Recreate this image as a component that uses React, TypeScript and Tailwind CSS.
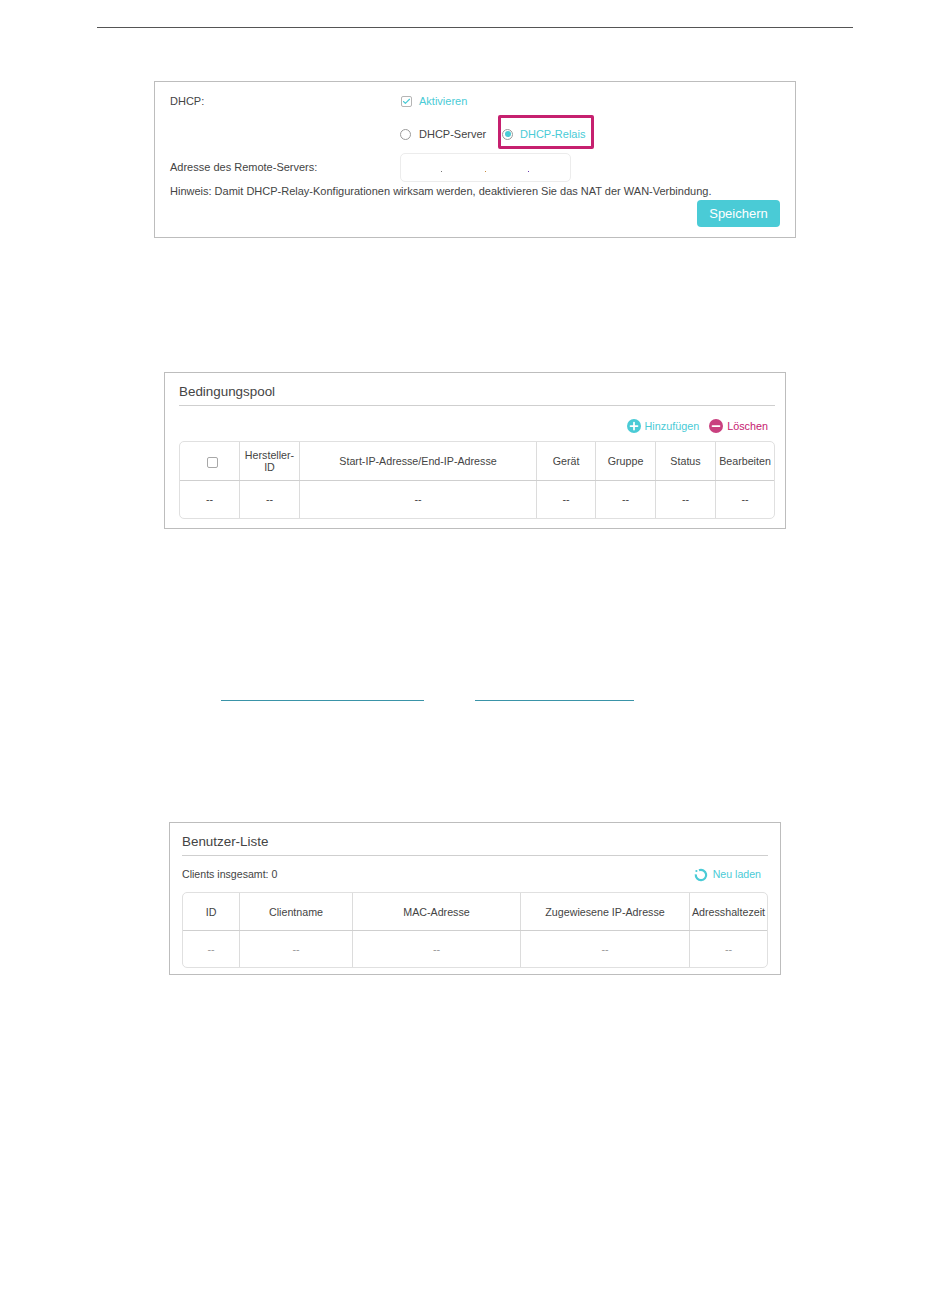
import { Check, Minus, Plus } from "lucide-react"

const font = "font-['Liberation_Sans',Arial,sans-serif]"

type TableProps = {
  cols: string[]
  head: React.ReactNode[]
  headH: string
  rowH: string
  width: string
  dash: string
}

function DataTable({ cols, head, headH, rowH, width, dash }: TableProps) {
  return (
    <div className={`${width} rounded-[5px] border border-[#e0e0e0] overflow-hidden`}>
      <div className={`flex ${headH} border-b border-[#cfcfcf]`}>
        {head.map((h, i) => (
          <div
            key={i}
            className={`${cols[i]} flex shrink-0 items-center justify-center text-center text-[10.7px] leading-[12px] text-[#444] ${i > 0 ? "border-l border-[#dcdcdc]" : ""}`}
          >
            {h}
          </div>
        ))}
      </div>
      <div className={`flex ${rowH}`}>
        {head.map((_, i) => (
          <div
            key={i}
            className={`${cols[i]} flex shrink-0 items-center justify-center text-[10.8px] ${dash} ${i > 0 ? "border-l border-[#dcdcdc]" : ""}`}
          >
            --
          </div>
        ))}
      </div>
    </div>
  )
}

function DhcpPanel() {
  return (
    <div className="ml-[154px] h-[157px] w-[642px] border border-[#bdbdbd] pl-[15px] text-[11px] text-[#444]">
      <div className="flex h-[33px] pt-[12px]">
        <span className="w-[230px] leading-[14px]">DHCP:</span>
        <span className="flex h-[14px] items-center">
          <span className="ml-px flex h-[11px] w-[11px] items-center justify-center rounded-[2px] border border-[#b5b5b5]">
            <Check className="h-[9px] w-[9px] text-[#4acbd6]" strokeWidth={3} />
          </span>
          <span className="ml-[7px] text-[#4acbd6]">Aktivieren</span>
        </span>
      </div>
      <div className="flex h-[34px] pl-[230px]">
        <span className="flex items-center pt-[4px]">
          <span className="h-[11px] w-[11px] rounded-full border border-[#9a9a9a]" />
          <span className="ml-[8px] w-[79px]">DHCP-Server</span>
        </span>
        <span className="flex w-[96px] items-center rounded-[2px] border-[3px] border-[#c6206f] pl-[1px] pt-[4px]">
          <span className="flex h-[11px] w-[11px] items-center justify-center rounded-full border border-[#9a9a9a]">
            <span className="h-[6px] w-[6px] rounded-full bg-[#4acbd6]" />
          </span>
          <span className="ml-[7px] text-[#4acbd6]">DHCP-Relais</span>
        </span>
      </div>
      <div className="mt-[4px] flex h-[29px]">
        <span className="w-[230px] pt-[7px] leading-[14px]">Adresse des Remote-Servers:</span>
        <div className="flex h-[29px] w-[171px] items-end rounded-[5px] border border-[#ececec] pb-[9px]">
          <span className="ml-[40px] h-px w-px bg-[#777]" />
          <span className="ml-[43px] h-px w-px bg-[#c98a3a]" />
          <span className="ml-[42px] h-px w-px bg-[#6a3ab0]" />
        </div>
      </div>
      <div className="flex h-[18px] items-center pt-[1px]">
        Hinweis: Damit DHCP-Relay-Konfigurationen wirksam werden, deaktivieren Sie das NAT der WAN-Verbindung.
      </div>
      <div className="flex justify-end pr-[15px]">
        <button className="h-[27px] w-[83px] rounded-[4px] bg-[#4acbd6] pt-[1px] text-[13px] text-white">Speichern</button>
      </div>
    </div>
  )
}

function PoolPanel() {
  return (
    <div className="ml-[164px] mt-[134px] h-[157px] w-[622px] border border-[#bdbdbd] pl-[14px]">
      <div className="flex h-[33px] w-[596px] items-end border-b border-[#cfcfcf] pb-[5px] text-[13.4px] leading-[16px] text-[#444]">
        Bedingungspool
      </div>
      <div className="flex h-[35px] w-[589px] items-center justify-end pt-[5px] text-[10.8px]">
        <span className="flex h-[14px] w-[14px] items-center justify-center rounded-full bg-[#4acbd6]">
          <Plus className="h-[12px] w-[12px] text-white" strokeWidth={3.5} />
        </span>
        <span className="ml-[4px] text-[#4acbd6]">Hinzufügen</span>
        <span className="ml-[10px] flex h-[14px] w-[14px] items-center justify-center rounded-full bg-[#c9407f]">
          <Minus className="h-[12px] w-[12px] text-white" strokeWidth={3.5} />
        </span>
        <span className="ml-[4px] text-[#c6206f]">Löschen</span>
      </div>
      <DataTable
        width="w-[596px]"
        headH="h-[39px]"
        rowH="h-[37px]"
        dash="text-[#444]"
        cols={["w-[59px]", "w-[60px]", "w-[237px]", "w-[59px]", "w-[60px]", "w-[60px]", "w-[59px]"]}
        head={[
          <span className="ml-[6px] mt-[2px] h-[11px] w-[11px] rounded-[2px] border border-[#a8a8a8]" />,
          <span>Hersteller-<br />ID</span>,
          "Start-IP-Adresse/End-IP-Adresse",
          "Gerät",
          "Gruppe",
          "Status",
          "Bearbeiten",
        ]}
      />
    </div>
  )
}

function LinksLine() {
  return (
    <div className="mt-[171px] flex h-px pl-[221px]">
      <span className="h-px w-[203px] bg-[#3a94a8]" />
      <span className="ml-[51px] h-px w-[159px] bg-[#3a94a8]" />
    </div>
  )
}

function ClientPanel() {
  return (
    <div className="ml-[169px] mt-[121px] h-[153px] w-[612px] border border-[#bdbdbd] pl-[12px]">
      <div className="flex h-[33px] w-[586px] items-end border-b border-[#cfcfcf] pb-[5px] text-[13.4px] leading-[16px] text-[#444]">
        Benutzer-Liste
      </div>
      <div className="flex h-[36px] w-[579px] items-center justify-between pt-[2px] text-[10.6px]">
        <span className="text-[#444]">Clients insgesamt: 0</span>
        <span className="flex items-center text-[#4acbd6]">
          <svg viewBox="0 0 14 14" className="h-[14px] w-[14px]" fill="none">
            <path d="M5 2.2A5.2 5.2 0 1 1 1.8 6.4" stroke="#4acbd6" strokeWidth="2.2" />
            <circle cx="2.4" cy="3" r="1.1" fill="#4acbd6" />
          </svg>
          <span className="ml-[5px]">Neu laden</span>
        </span>
      </div>
      <DataTable
        width="w-[586px]"
        headH="h-[38px]"
        rowH="h-[36px]"
        dash="text-[#999]"
        cols={["w-[56px]", "w-[113px]", "w-[168px]", "w-[169px]", "w-[78px]"]}
        head={["ID", "Clientname", "MAC-Adresse", "Zugewiesene IP-Adresse", "Adresshaltezeit"]}
      />
    </div>
  )
}

export default function App() {
  return (
    <div className={`${font} h-[1290px] w-[950px] bg-white pt-[27px]`}>
      <div className="mb-[53px] ml-[97px] h-px w-[756px] bg-[#555]" />
      <DhcpPanel />
      <PoolPanel />
      <LinksLine />
      <ClientPanel />
    </div>
  )
}
